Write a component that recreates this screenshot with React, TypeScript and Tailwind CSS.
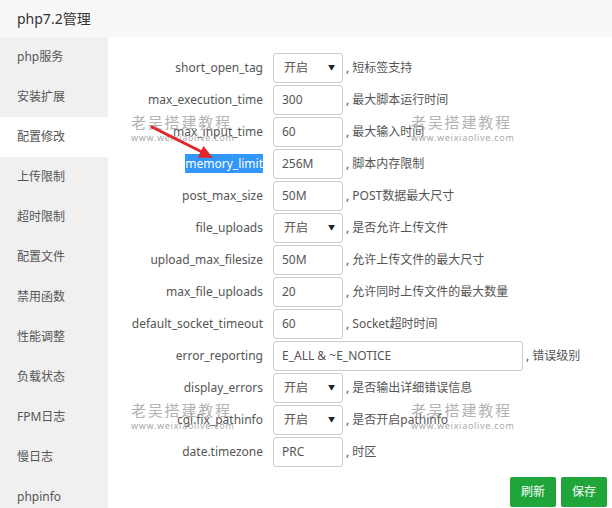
import React from 'react';

type Row = {
  label: string;
  value: string;
  note: string;
  kind?: 'select' | 'wide';
  selected?: boolean;
};

const rows: Row[] = [
  { label: 'short_open_tag', value: '开启', note: ', 短标签支持', kind: 'select' },
  { label: 'max_execution_time', value: '300', note: ', 最大脚本运行时间' },
  { label: 'max_input_time', value: '60', note: ', 最大输入时间' },
  { label: 'memory_limit', value: '256M', note: ', 脚本内存限制', selected: true },
  { label: 'post_max_size', value: '50M', note: ', POST数据最大尺寸' },
  { label: 'file_uploads', value: '开启', note: ', 是否允许上传文件', kind: 'select' },
  { label: 'upload_max_filesize', value: '50M', note: ', 允许上传文件的最大尺寸' },
  { label: 'max_file_uploads', value: '20', note: ', 允许同时上传文件的最大数量' },
  { label: 'default_socket_timeout', value: '60', note: ', Socket超时时间' },
  { label: 'error_reporting', value: 'E_ALL & ~E_NOTICE', note: ', 错误级别', kind: 'wide' },
  { label: 'display_errors', value: '开启', note: ', 是否输出详细错误信息', kind: 'select' },
  { label: 'cgi.fix_pathinfo', value: '开启', note: ', 是否开启pathinfo', kind: 'select' },
  { label: 'date.timezone', value: 'PRC', note: ', 时区' },
];

const menu = ['php服务', '安装扩展', '配置修改', '上传限制', '超时限制', '配置文件', '禁用函数', '性能调整', '负载状态', 'FPM日志', '慢日志', 'phpinfo'];

function Watermark({ className }: { className: string }) {
  return (
    <div className={`absolute pointer-events-none leading-none ${className}`}>
      <div className="text-[15px] tracking-[1.8px] text-[#999] opacity-75">老吴搭建教程</div>
      <div className="mt-[3px] text-[9px] tracking-[0.7px] text-[#a8a8a8]">www.weixiaolive.com</div>
    </div>
  );
}

export default function App() {
  return (
    <div
      className="relative w-[612px] h-[508px] overflow-hidden bg-white text-[#555]"
      style={{ fontFamily: '"Noto Sans", "Noto Sans CJK SC", sans-serif' }}
    >
      <div className="h-[37px] bg-[#f8f8f8] px-[17px] flex items-center text-[14px] text-[#333]">php7.2管理</div>
      <div className="flex h-[471px]">
        <div className="w-[108px] bg-[#f0f0f0] shrink-0">
          {menu.map((m) => (
            <div
              key={m}
              className={`h-[40px] flex items-center pl-[17px] text-[12px] text-[#555] ${m === '配置修改' ? 'bg-white' : ''}`}
            >
              {m}
            </div>
          ))}
        </div>
        <div className="flex-1 pt-[15px] text-[12px]">
          {rows.map((r) => (
            <div key={r.label} className="h-[32px] flex items-center">
              <div className="w-[155px] text-right">
                <span className={r.selected ? 'bg-[#3297fd] text-white py-[1px]' : 'text-[#555]'}>{r.label}</span>
              </div>
              <div
                className={`ml-[10px] h-[30px] border border-[#ccc] rounded-[3px] bg-white flex items-center px-[8px] text-[#555] ${r.kind === 'wide' ? 'w-[250px]' : 'w-[70px]'} ${r.kind === 'select' ? 'justify-between pl-[10px] pr-[7px]' : ''}`}
              >
                <span>{r.value}</span>
                {r.kind === 'select' && <span className="text-[7px] text-[#222]">▼</span>}
              </div>
              <span className="ml-[3px] text-[#555]">{r.note}</span>
            </div>
          ))}
          <div className="flex justify-end gap-[5px] pr-[5px] mt-[9px]">
            <button className="w-[46px] h-[30px] rounded-[2px] bg-[#20a53a] text-white text-[12px]">刷新</button>
            <button className="w-[46px] h-[30px] rounded-[2px] bg-[#20a53a] text-white text-[12px]">保存</button>
          </div>
        </div>
      </div>

      <Watermark className="left-[131px] top-[115px]" />
      <Watermark className="left-[411px] top-[115px]" />
      <Watermark className="left-[131px] top-[403px]" />
      <Watermark className="left-[411px] top-[403px]" />

      <svg className="absolute left-0 top-0 pointer-events-none" width="612" height="508">
        <line x1="152" y1="127" x2="202" y2="152" stroke="#e3262b" strokeWidth="3" strokeLinecap="round" />
        <polygon points="213,158 197.8,157.5 203.5,146" fill="#e3262b" />
      </svg>
    </div>
  );
}
